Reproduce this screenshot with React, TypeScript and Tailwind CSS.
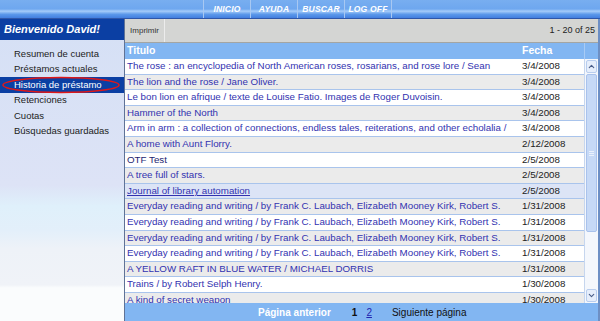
import { ChevronUp, ChevronDown } from "lucide-react";

const rows = [
  { t: "The rose : an encyclopedia of North American roses, rosarians, and rose lore / Sean", d: "3/4/2008" },
  { t: "The lion and the rose / Jane Oliver.", d: "3/4/2008" },
  { t: "Le bon lion en afrique / texte de Louise Fatio. Images de Roger Duvoisin.", d: "3/4/2008" },
  { t: "Hammer of the North", d: "3/4/2008" },
  { t: "Arm in arm : a collection of connections, endless tales, reiterations, and other echolalia /", d: "3/4/2008" },
  { t: "A home with Aunt Florry.", d: "2/12/2008" },
  { t: "OTF Test", d: "2/5/2008" },
  { t: "A tree full of stars.", d: "2/5/2008" },
  { t: "Journal of library automation", d: "2/5/2008", hover: true },
  { t: "Everyday reading and writing / by Frank C. Laubach, Elizabeth Mooney Kirk, Robert S.", d: "1/31/2008" },
  { t: "Everyday reading and writing / by Frank C. Laubach, Elizabeth Mooney Kirk, Robert S.", d: "1/31/2008" },
  { t: "Everyday reading and writing / by Frank C. Laubach, Elizabeth Mooney Kirk, Robert S.", d: "1/31/2008" },
  { t: "Everyday reading and writing / by Frank C. Laubach, Elizabeth Mooney Kirk, Robert S.", d: "1/31/2008" },
  { t: "A YELLOW RAFT IN BLUE WATER / MICHAEL DORRIS", d: "1/31/2008" },
  { t: "Trains / by Robert Selph Henry.", d: "1/30/2008" },
  { t: "A kind of secret weapon", d: "1/30/2008" },
];

const menu = [
  "Resumen de cuenta",
  "Préstamos actuales",
  "Historia de préstamo",
  "Retenciones",
  "Cuotas",
  "Búsquedas guardadas",
];

const nav = ["INICIO", "AYUDA", "BUSCAR", "LOG OFF"];

export default function App() {
  return (
    <div className="w-[600px] h-[321px] flex flex-col overflow-hidden bg-white font-['Liberation_Sans',Arial,sans-serif] text-[10px]">
      {/* top nav */}
      <div className="h-[19px] shrink-0 flex border-b border-[#2f56a8] bg-[linear-gradient(to_bottom,#78aef0_0%,#6ea7ef_50%,#a6ccf9_62%,#5a97ea_80%,#437fdf_100%)]">
        <div className="w-[204px] border-r border-[#a8c8f2]" />
        {nav.map((n) => (
          <div
            key={n}
            className="w-[47px] border-r border-[#a8c8f2] flex items-center justify-center text-white italic font-bold text-[8.5px] tracking-[0.2px]"
          >
            {n}
          </div>
        ))}
      </div>

      <div className="flex-1 flex min-h-0">
        {/* left panel */}
        <aside className="w-[125px] shrink-0 flex flex-col border-r border-[#5f7296] bg-[linear-gradient(to_bottom,#d5e0f5_0%,#dde3f6_55%,#dff0fb_62%,#e3effa_70%,#eef2f8_76%,#f0f3f8_88%,#fafcfd_89%,#fafcfd_100%)]">
          <div className="h-[21px] shrink-0 bg-[#0b3fa3] text-white font-bold italic text-[11px] flex items-center pl-[4px]">
            Bienvenido David!
          </div>
          <ul className="pt-[6px]">
            {menu.map((m) => {
              const sel = m === "Historia de préstamo";
              return (
                <li
                  key={m}
                  className={`relative h-[15.5px] flex items-center pl-[14px] text-[9.5px] ${
                    sel ? "bg-[#0b3fa3] text-white" : "text-[#222]"
                  }`}
                >
                  {m}
                  {sel && (
                    <svg className="absolute left-0 top-[-1px]" width="124" height="18" viewBox="0 0 124 18">
                      <ellipse cx="61" cy="9" rx="58" ry="7.5" fill="none" stroke="#e01818" strokeWidth="1.5" />
                    </svg>
                  )}
                </li>
              );
            })}
          </ul>
        </aside>

        {/* main */}
        <main className="flex-1 flex flex-col min-w-0 border-r-2 border-[#6d8fc4]">
          <div className="h-[24px] shrink-0 flex items-stretch bg-[#d4d5d3] border-b border-[#a3a5a3]">
            <div className="w-[40px] border-r border-[#ececec] flex items-center justify-center text-[8px] text-[#333]">
              Imprimir
            </div>
            <div className="flex-1" />
            <div className="flex items-center pr-[3px] text-[9px] text-[#222]">1 - 20 of 25</div>
          </div>

          <div className="h-[16px] shrink-0 flex bg-[#82b6f2] text-white font-bold text-[10.5px]">
            <div className="flex-1 pl-[2px] flex items-center">Titulo</div>
            <div className="w-[62px] flex items-center">Fecha</div>
            <div className="w-[14px] border-l border-[#a8cbf5]" />
          </div>

          <div className="flex-1 flex min-h-0 overflow-hidden">
            <div className="flex-1 min-w-0 text-[9.75px]">
              {rows.map((r, i) => (
                <div
                  key={i}
                  className={`h-[15.6px] flex items-center border-b border-[#a9c4ec] ${
                    r.hover ? "bg-[#dce4f6]" : i % 2 ? "bg-[#ebebeb]" : "bg-white"
                  }`}
                >
                  <div
                    className={`flex-1 pl-[2px] whitespace-nowrap overflow-hidden ${
                      r.t === "OTF Test" ? "text-[#1e1e70]" : "text-[#3232b0]"
                    } ${r.hover ? "underline" : ""}`}
                  >
                    {r.t}
                  </div>
                  <div className="w-[62px] text-[#222]">{r.d}</div>
                </div>
              ))}
            </div>
            {/* scrollbar */}
            <div className="w-[14px] shrink-0 flex flex-col bg-[#f4f7fc] border-l border-[#c6d6ee] px-[1px] py-[1px]">
              <div className="h-[13px] flex items-center justify-center bg-[#e6eefb] border border-[#b8cdee] rounded-[2px]">
                <ChevronUp size={9} strokeWidth={3} className="text-[#4a5e8a]" />
              </div>
              <div className="h-[158px] mt-[1px] bg-[#c6d9f6] border border-[#a9c2ec] rounded-[2px] flex items-center justify-center">
                <div className="w-[5px] flex flex-col gap-[1px]">
                  <div className="h-px bg-[#eaf1fc]" />
                  <div className="h-px bg-[#eaf1fc]" />
                  <div className="h-px bg-[#eaf1fc]" />
                </div>
              </div>
              <div className="flex-1" />
              <div className="h-[13px] flex items-center justify-center bg-[#e6eefb] border border-[#b8cdee] rounded-[2px]">
                <ChevronDown size={9} strokeWidth={3} className="text-[#4a5e8a]" />
              </div>
            </div>
          </div>

          <div className="h-[18px] shrink-0 flex items-center bg-[#82b6f2] text-[10px]">
            <span className="ml-[133px] text-white font-bold">Página anterior</span>
            <span className="ml-[21px] font-bold text-[#111]">1</span>
            <span className="ml-[9px] underline text-[#2424b0]">2</span>
            <span className="ml-[20px] text-[#111]">Siguiente página</span>
          </div>
        </main>
      </div>
    </div>
  );
}
